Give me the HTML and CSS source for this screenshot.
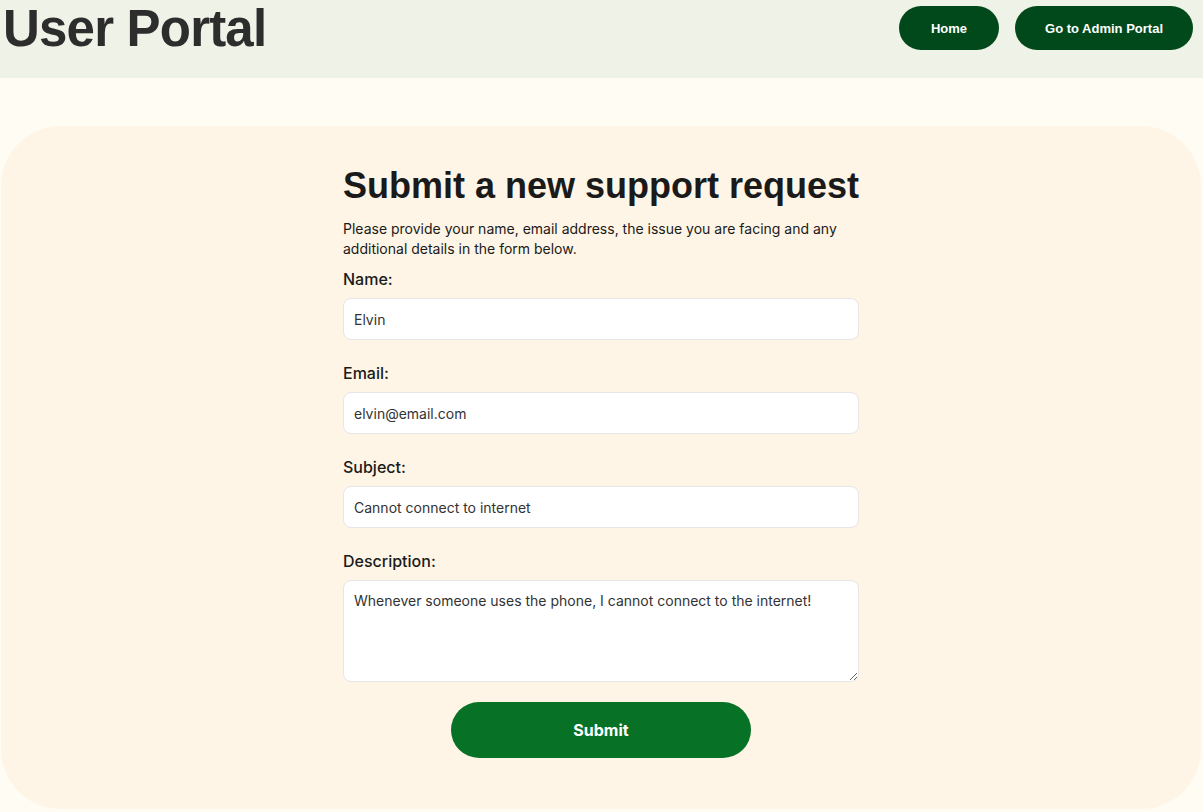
FILE: index.html
```html
<!DOCTYPE html>
<html lang="en">
<head>
<meta charset="utf-8">
<title>User Portal</title>
<link rel="stylesheet" href="styles.css">
</head>
<body>
<header class="topbar">
  <h1 class="brand">User Portal</h1>
  <nav class="nav">
    <a class="nav-btn" href="#">Home</a>
    <a class="nav-btn" href="#">Go to Admin Portal</a>
  </nav>
</header>
<main class="card">
  <div class="form-wrap">
    <h2 class="title">Submit a new support request</h2>
    <p class="intro">Please provide your name, email address, the issue you are facing and any additional details in the form below.</p>
    <form class="form">
      <div class="field">
        <label class="label" for="name">Name:</label>
        <input class="input" id="name" type="text" value="Elvin">
      </div>
      <div class="field">
        <label class="label" for="email">Email:</label>
        <input class="input" id="email" type="email" value="elvin@email.com">
      </div>
      <div class="field">
        <label class="label" for="subject">Subject:</label>
        <input class="input" id="subject" type="text" value="Cannot connect to internet">
      </div>
      <div class="field field-last">
        <label class="label" for="desc">Description:</label>
        <textarea class="textarea" id="desc">Whenever someone uses the phone, I cannot connect to the internet!</textarea>
      </div>
      <div class="actions">
        <button class="submit" type="button">Submit</button>
      </div>
    </form>
  </div>
</main>
</body>
</html>
```

FILE: styles.css
```css
* { box-sizing: border-box; }

html, body {
  margin: 0;
  padding: 0;
}

body {
  background: #fffcf4;
  font-family: "Inter", "Liberation Sans", sans-serif;
  color: #1a1a1a;
}

.topbar {
  height: 78px;
  background: #eff2e6;
  display: flex;
  justify-content: space-between;
  align-items: flex-start;
  padding: 0 10px 0 3px;
}

.brand {
  margin: 0;
  padding-top: 3px;
  font-family: "Liberation Sans", Arial, sans-serif;
  font-weight: 700;
  font-size: 51px;
  line-height: 51px;
  letter-spacing: -0.8px;
  color: #2d2d2d;
}

.nav {
  display: flex;
  gap: 16px;
  margin-top: 6px;
}

.nav-btn {
  display: flex;
  align-items: center;
  justify-content: center;
  height: 44px;
  min-width: 100px;
  padding: 0 30px;
  border-radius: 22px;
  background: #01491b;
  color: #ffffff;
  text-decoration: none;
  font-family: "Liberation Sans", Arial, sans-serif;
  font-weight: 700;
  font-size: 13px;
}

.card {
  margin: 48px 2px 3px 1px;
  background: #fef5e6;
  border-radius: 60px;
  padding: 39px 0 51px;
}

.form-wrap {
  width: 516px;
  margin: 0 auto;
}

.title {
  margin: 0 0 12px;
  font-family: "Liberation Sans", Arial, sans-serif;
  font-weight: 700;
  font-size: 36px;
  line-height: 42px;
  white-space: nowrap;
  color: #1a1a1a;
}

.intro {
  margin: 0 0 10px;
  font-size: 14px;
  line-height: 20px;
  color: #1a1a1a;
}

.form {
  margin: 0;
}

.field {
  display: flex;
  flex-direction: column;
  margin-bottom: 23px;
}

.field-last {
  margin-bottom: 20px;
}

.label {
  font-size: 16px;
  line-height: 20px;
  font-weight: 500;
  margin-bottom: 9px;
  color: #1a1a1a;
}

.input,
.textarea {
  width: 100%;
  background: #ffffff;
  border: 1px solid #e6e6e6;
  border-radius: 8px;
  font-family: "Inter", "Liberation Sans", sans-serif;
  font-size: 14px;
  color: #333333;
  padding: 0 10px;
  outline: none;
}

.input {
  height: 42px;
}

.textarea {
  height: 102px;
  padding: 10px 10px;
  line-height: 20px;
  resize: vertical;
  display: block;
}

.actions {
  display: flex;
  justify-content: center;
}

.submit {
  width: 300px;
  height: 56px;
  border: none;
  border-radius: 28px;
  background: #077226;
  color: #ffffff;
  font-family: "Inter", "Liberation Sans", sans-serif;
  font-weight: 700;
  font-size: 16px;
  cursor: pointer;
}
```
